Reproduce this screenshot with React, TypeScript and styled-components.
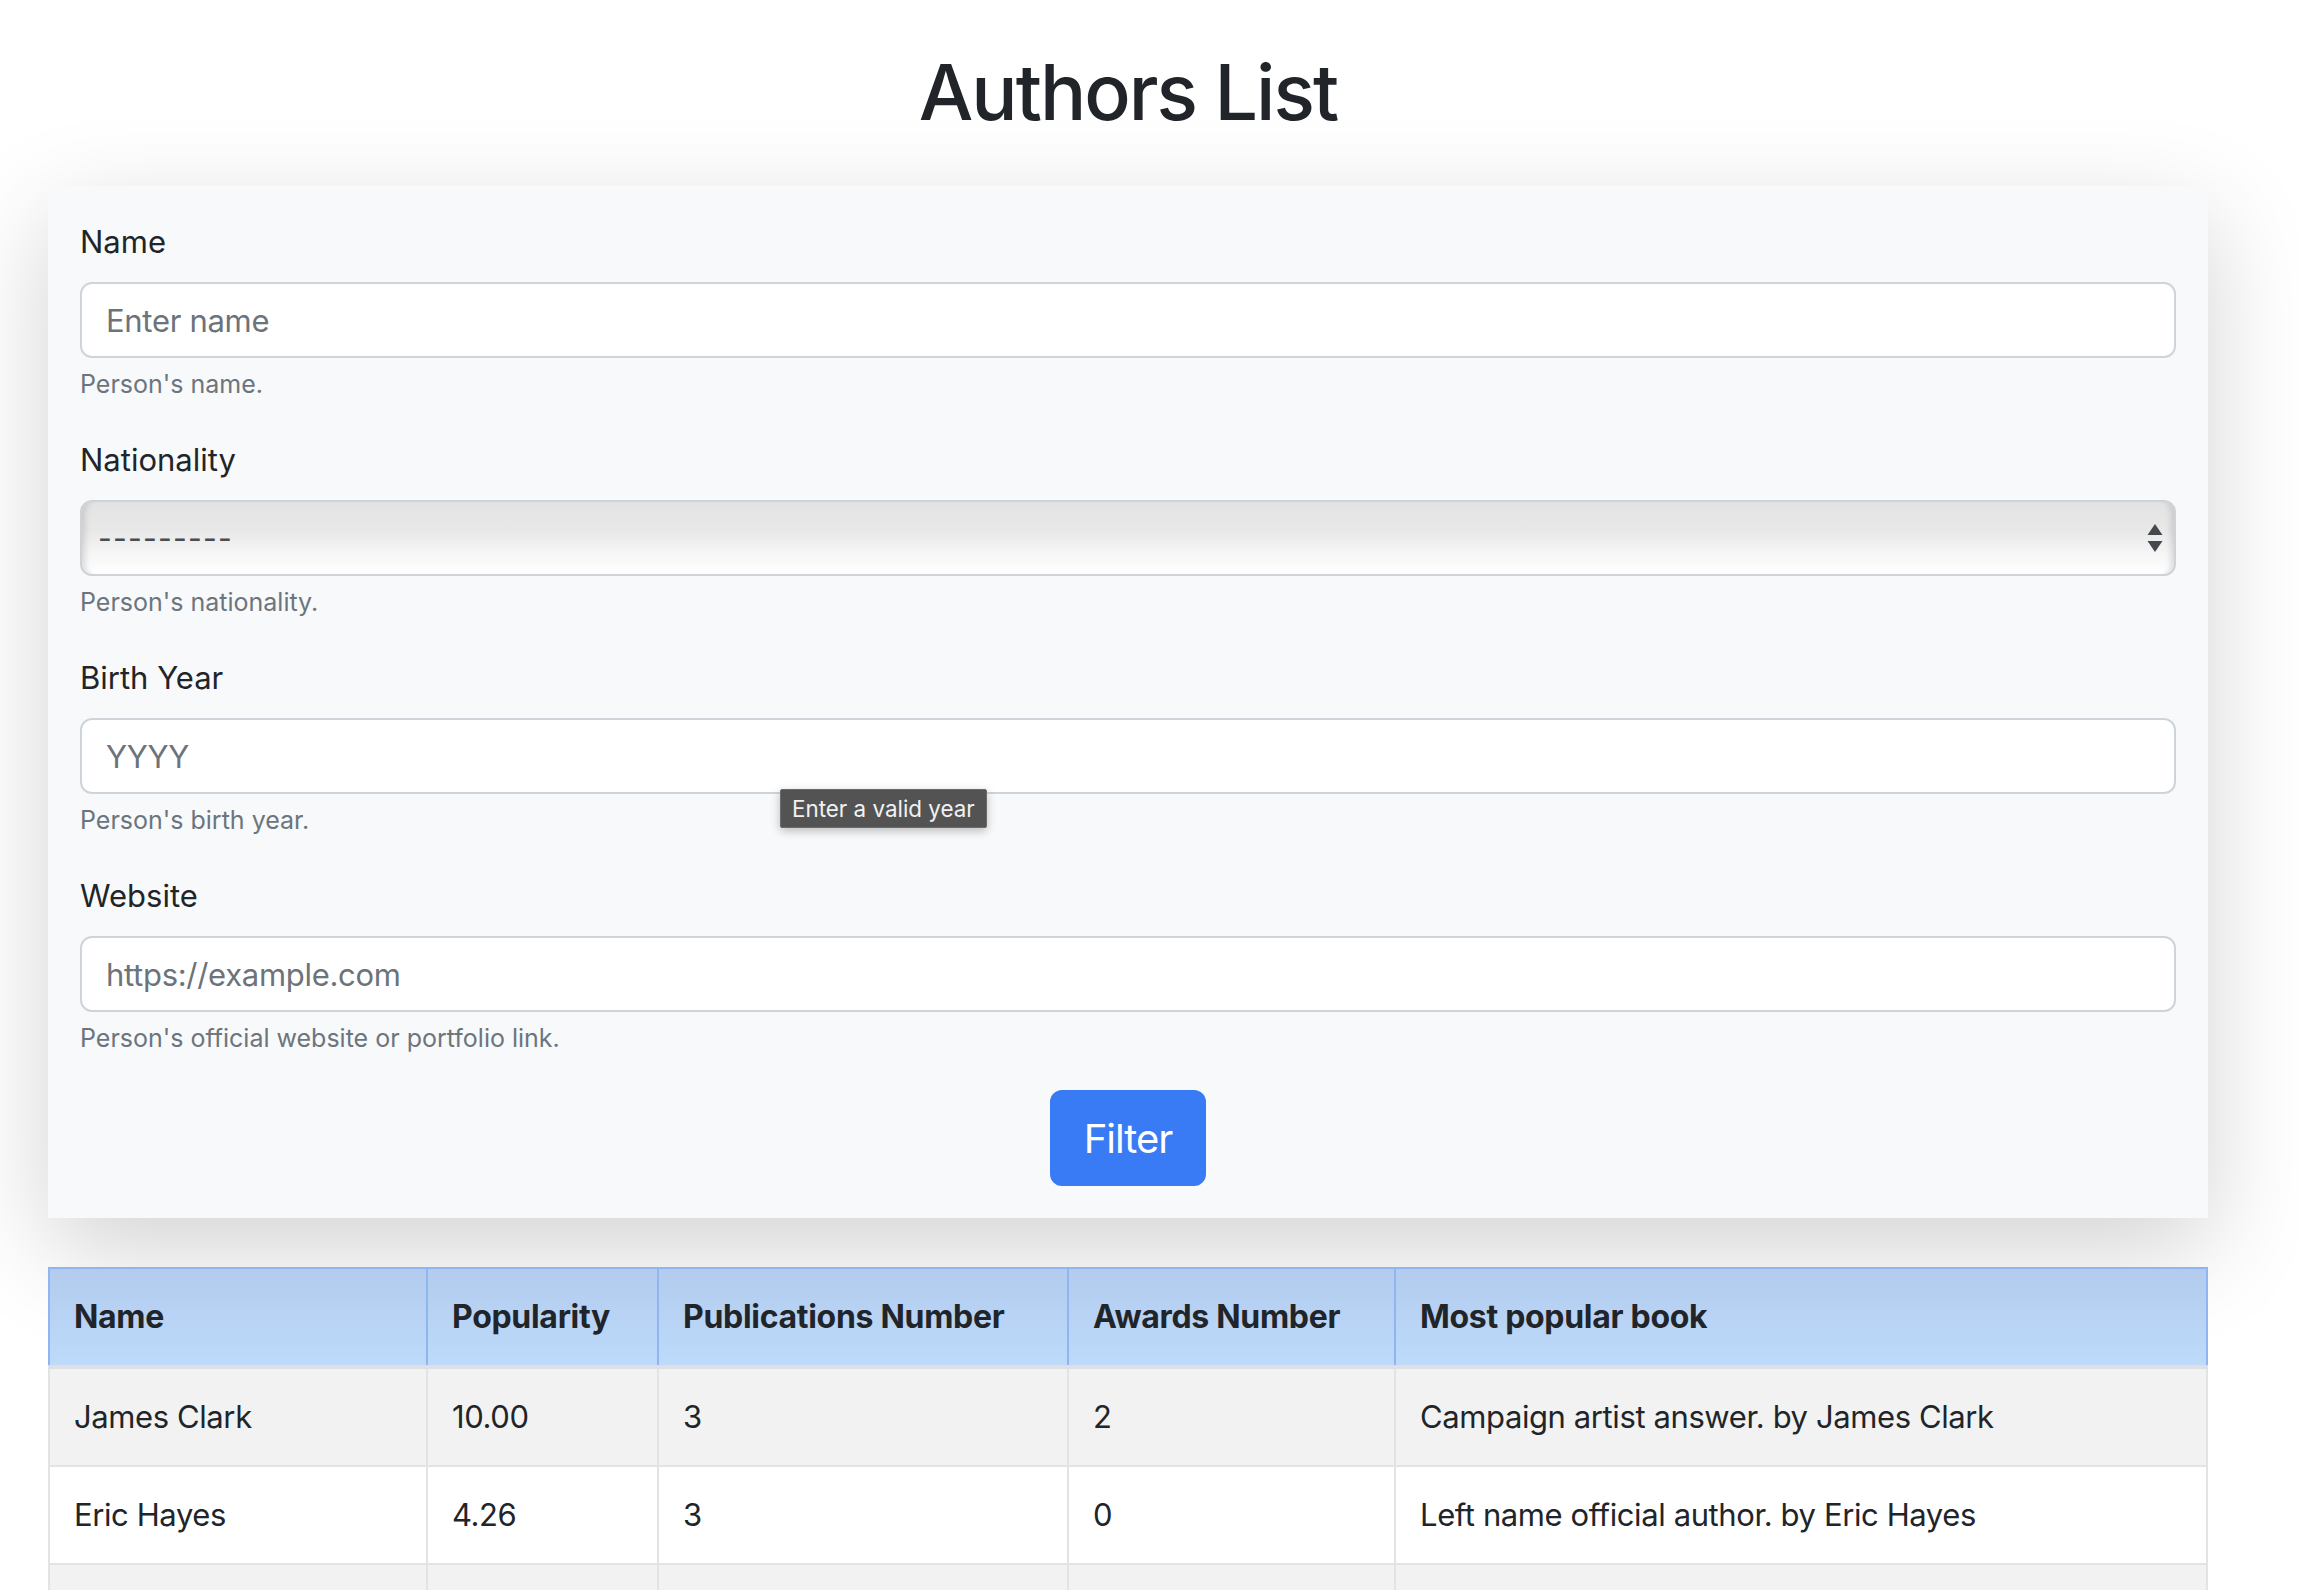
import React from "react";
import styled, { createGlobalStyle } from "styled-components";

const GlobalStyle = createGlobalStyle`
  html, body {
    margin: 0;
    padding: 0;
    background: #ffffff;
  }
  body {
    font-family: Inter, "Noto Sans", "Liberation Sans", sans-serif;
    color: #212529;
  }
  * { box-sizing: border-box; }
`;

const Page = styled.div`
  width: 2160px;
  margin-left: 48px;
  padding-top: 44px;
`;

const Title = styled.h1`
  margin: 0 0 46px;
  text-align: center;
  font-size: 77px;
  line-height: 96px;
  font-weight: 500;
  letter-spacing: -2px;
  color: #212529;
`;

const Card = styled.form`
  background: #f8f9fa;
  padding: 32px;
  box-shadow: 0 32px 96px rgba(0, 0, 0, 0.175);
`;

const Field = styled.div`
  margin-bottom: 32px;
`;

const Label = styled.label`
  display: block;
  font-size: 31px;
  line-height: 48px;
  margin-bottom: 16px;
  color: #212529;
`;

const InputWrap = styled.div`
  position: relative;
`;

const TextInput = styled.input`
  display: block;
  width: 100%;
  height: 76px;
  padding: 0 24px;
  font-family: inherit;
  font-size: 31px;
  letter-spacing: -0.3px;
  color: #212529;
  background: #ffffff;
  border: 2px solid #ced4da;
  border-radius: 12px;
  outline: none;
  &::placeholder {
    color: #6c737a;
  }
`;

const Select = styled.select`
  display: block;
  width: 100%;
  height: 76px;
  padding: 0 16px;
  appearance: none;
  -webkit-appearance: none;
  font-family: inherit;
  font-size: 30px;
  letter-spacing: 1.2px;
  color: #4a4c50;
  border: 2px solid #cfd2d6;
  border-radius: 12px;
  background: linear-gradient(
    to bottom,
    #e3e3e3 0%,
    #e8e8e8 40%,
    #f5f5f5 70%,
    #ffffff 100%
  );
  box-shadow: inset 8px 0 6px -5px rgba(0, 0, 0, 0.13),
    inset -8px 0 6px -5px rgba(0, 0, 0, 0.13);
  outline: none;
`;

const SelectArrows = styled.svg`
  position: absolute;
  right: 13px;
  top: 23px;
  width: 16px;
  height: 30px;
  pointer-events: none;
`;

const Help = styled.div`
  margin-top: 7px;
  font-size: 25px;
  line-height: 39px;
  color: #6c757d;
`;

const Tooltip = styled.div`
  position: absolute;
  left: 700px;
  top: 71px;
  height: 39px;
  padding: 0 11px;
  display: flex;
  align-items: center;
  background: #535353;
  border: 1px solid #6b6b6b;
  border-radius: 2px;
  color: #f1f1f1;
  font-size: 22.4px;
  white-space: nowrap;
  box-shadow: 0 3px 10px rgba(0, 0, 0, 0.25);
  z-index: 2;
`;

const ButtonRow = styled.div`
  display: flex;
  justify-content: center;
`;

const PrimaryButton = styled.button`
  height: 96px;
  padding: 0 32px;
  font-family: inherit;
  font-size: 40px;
  letter-spacing: -1px;
  color: #ffffff;
  background: #387bf5;
  border: 2px solid #387bf5;
  border-radius: 12px;
  cursor: pointer;
`;

const Table = styled.table`
  margin-top: 49px;
  width: 100%;
  table-layout: fixed;
  border-collapse: collapse;
  font-size: 32px;
  color: #212529;
`;

const HeadRow = styled.tr`
  background: linear-gradient(to bottom, #b2cbee, #bedbfb);
`;

const Th = styled.th`
  text-align: left;
  font-weight: 700;
  letter-spacing: -0.3px;
  padding: 24px 24px;
  line-height: 48px;
  border: 2px solid #8fb6f0;
  border-bottom: 4px solid #dcdfe3;
`;

const BodyRow = styled.tr<{ $striped: boolean }>`
  background: ${(p) => (p.$striped ? "#f2f2f2" : "#ffffff")};
`;

const Td = styled.td`
  padding: 24px 24px;
  line-height: 48px;
  font-size: 31px;
  letter-spacing: -0.4px;
  border: 2px solid #e1e3e7;
  white-space: nowrap;
  overflow: hidden;
`;

const columns = [
  { title: "Name", width: 378 },
  { title: "Popularity", width: 231 },
  { title: "Publications Number", width: 410 },
  { title: "Awards Number", width: 327 },
  { title: "Most popular book", width: 812 },
];

const authors = [
  ["James Clark", "10.00", "3", "2", "Campaign artist answer. by James Clark"],
  ["Eric Hayes", "4.26", "3", "0", "Left name official author. by Eric Hayes"],
  ["Laura Bennett", "3.80", "2", "1", "Quiet river morning. by Laura Bennett"],
  ["Mark Foster", "2.15", "1", "0", "Every open window. by Mark Foster"],
];

export default function App() {
  return (
    <>
      <GlobalStyle />
      <Page>
        <Title>Authors List</Title>
        <Card onSubmit={(e) => e.preventDefault()}>
          <Field>
            <Label htmlFor="name">Name</Label>
            <TextInput id="name" placeholder="Enter name" />
            <Help>Person's name.</Help>
          </Field>
          <Field>
            <Label htmlFor="nationality">Nationality</Label>
            <InputWrap>
              <Select id="nationality" defaultValue="">
                <option value="">---------</option>
              </Select>
              <SelectArrows viewBox="0 0 16 30">
                <path d="M8 1 L15.5 12 L0.5 12 Z" fill="#45484d" />
                <path d="M0.5 18 L15.5 18 L8 29 Z" fill="#45484d" />
              </SelectArrows>
            </InputWrap>
            <Help>Person's nationality.</Help>
          </Field>
          <Field>
            <Label htmlFor="birth">Birth Year</Label>
            <InputWrap>
              <TextInput id="birth" placeholder="YYYY" />
              <Tooltip>Enter a valid year</Tooltip>
            </InputWrap>
            <Help>Person's birth year.</Help>
          </Field>
          <Field>
            <Label htmlFor="website">Website</Label>
            <TextInput id="website" placeholder="https://example.com" />
            <Help>Person's official website or portfolio link.</Help>
          </Field>
          <ButtonRow>
            <PrimaryButton type="submit">Filter</PrimaryButton>
          </ButtonRow>
        </Card>
        <Table>
          <colgroup>
            {columns.map((c) => (
              <col key={c.title} style={{ width: c.width }} />
            ))}
          </colgroup>
          <thead>
            <HeadRow>
              {columns.map((c) => (
                <Th key={c.title}>{c.title}</Th>
              ))}
            </HeadRow>
          </thead>
          <tbody>
            {authors.map((row, i) => (
              <BodyRow key={row[0]} $striped={i % 2 === 0}>
                {row.map((cell, j) => (
                  <Td key={j}>{cell}</Td>
                ))}
              </BodyRow>
            ))}
          </tbody>
        </Table>
      </Page>
    </>
  );
}
